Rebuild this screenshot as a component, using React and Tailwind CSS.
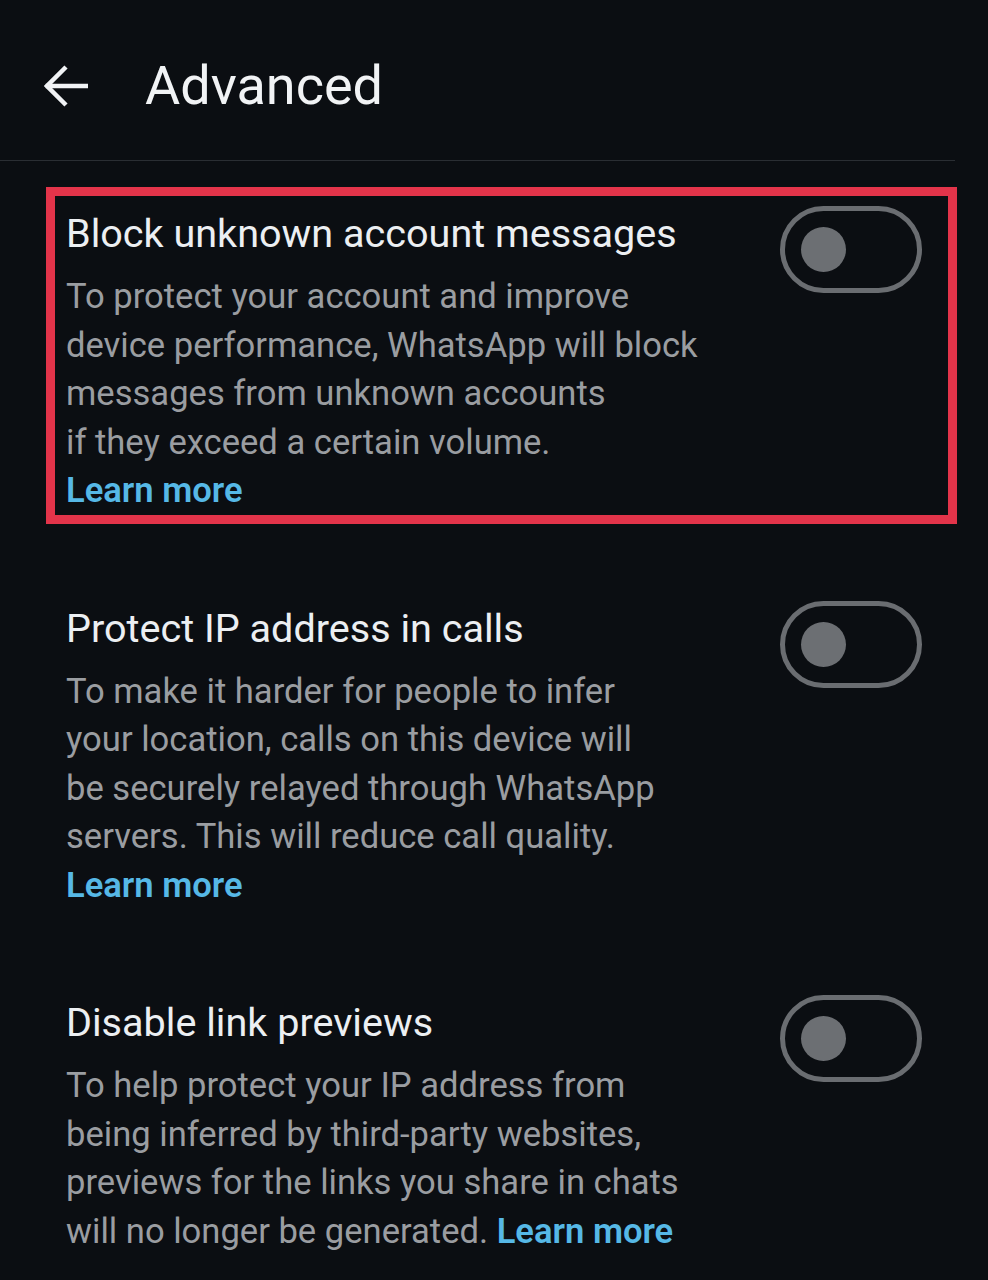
import React from "react";

function Toggle() {
  return (
    <div className="w-[142px] h-[87px] rounded-full border-[5px] border-[#6a6d71] flex items-center pl-[16px] shrink-0 -mt-[4px]">
      <div className="w-[45px] h-[45px] rounded-full bg-[#6c6f73]" />
    </div>
  );
}

function Section({ title, children, highlight }) {
  return (
    <div
      className={
        "flex justify-between border-[9px] pl-[11px] pr-[26px] pt-[14px] " +
        (highlight ? "border-[#e3344a]" : "border-transparent")
      }
    >
      <div className="flex flex-col">
        <div className="text-[39.6px] leading-[48px] text-[#eceff2]">{title}</div>
        <div className="mt-[14px] text-[34.6px] leading-[48.5px] text-[#9a9da1]">{children}</div>
      </div>
      <Toggle />
    </div>
  );
}

const Learn = () => (
  <span className="font-semibold text-[#56b8e6]">Learn more</span>
);

export default function App() {
  return (
    <div className="w-[988px] h-[1280px] bg-[#0b0e12] overflow-hidden" style={{ fontFamily: "Roboto, sans-serif" }}>
      <div className="h-[160px] flex items-center pl-[44px] pt-[12px]">
        <svg width="44" height="44" viewBox="0 0 44 44" fill="none" stroke="#f1f3f5" strokeWidth="4.5" strokeLinecap="square">
          <path d="M4 22 H42" />
          <path d="M22 3 L3 22 L22 41" strokeLinecap="butt" />
        </svg>
        <div className="ml-[57px] text-[54px] leading-none text-[#f1f3f5]">Advanced</div>
      </div>
      <div className="h-px w-[955px] bg-[#2a2e33]" />
      <div className="pl-[46px] pr-[31px] pt-[26px] flex flex-col gap-[58px]">
        <Section title="Block unknown account messages" highlight>
          To protect your account and improve<br />
          device performance, WhatsApp will block<br />
          messages from unknown accounts<br />
          if they exceed a certain volume.<br />
          <Learn />
        </Section>
        <Section title="Protect IP address in calls">
          To make it harder for people to infer<br />
          your location, calls on this device will<br />
          be securely relayed through WhatsApp<br />
          servers. This will reduce call quality.<br />
          <Learn />
        </Section>
        <Section title="Disable link previews">
          To help protect your IP address from<br />
          being inferred by third-party websites,<br />
          previews for the links you share in chats<br />
          will no longer be generated. <Learn />
        </Section>
      </div>
    </div>
  );
}
